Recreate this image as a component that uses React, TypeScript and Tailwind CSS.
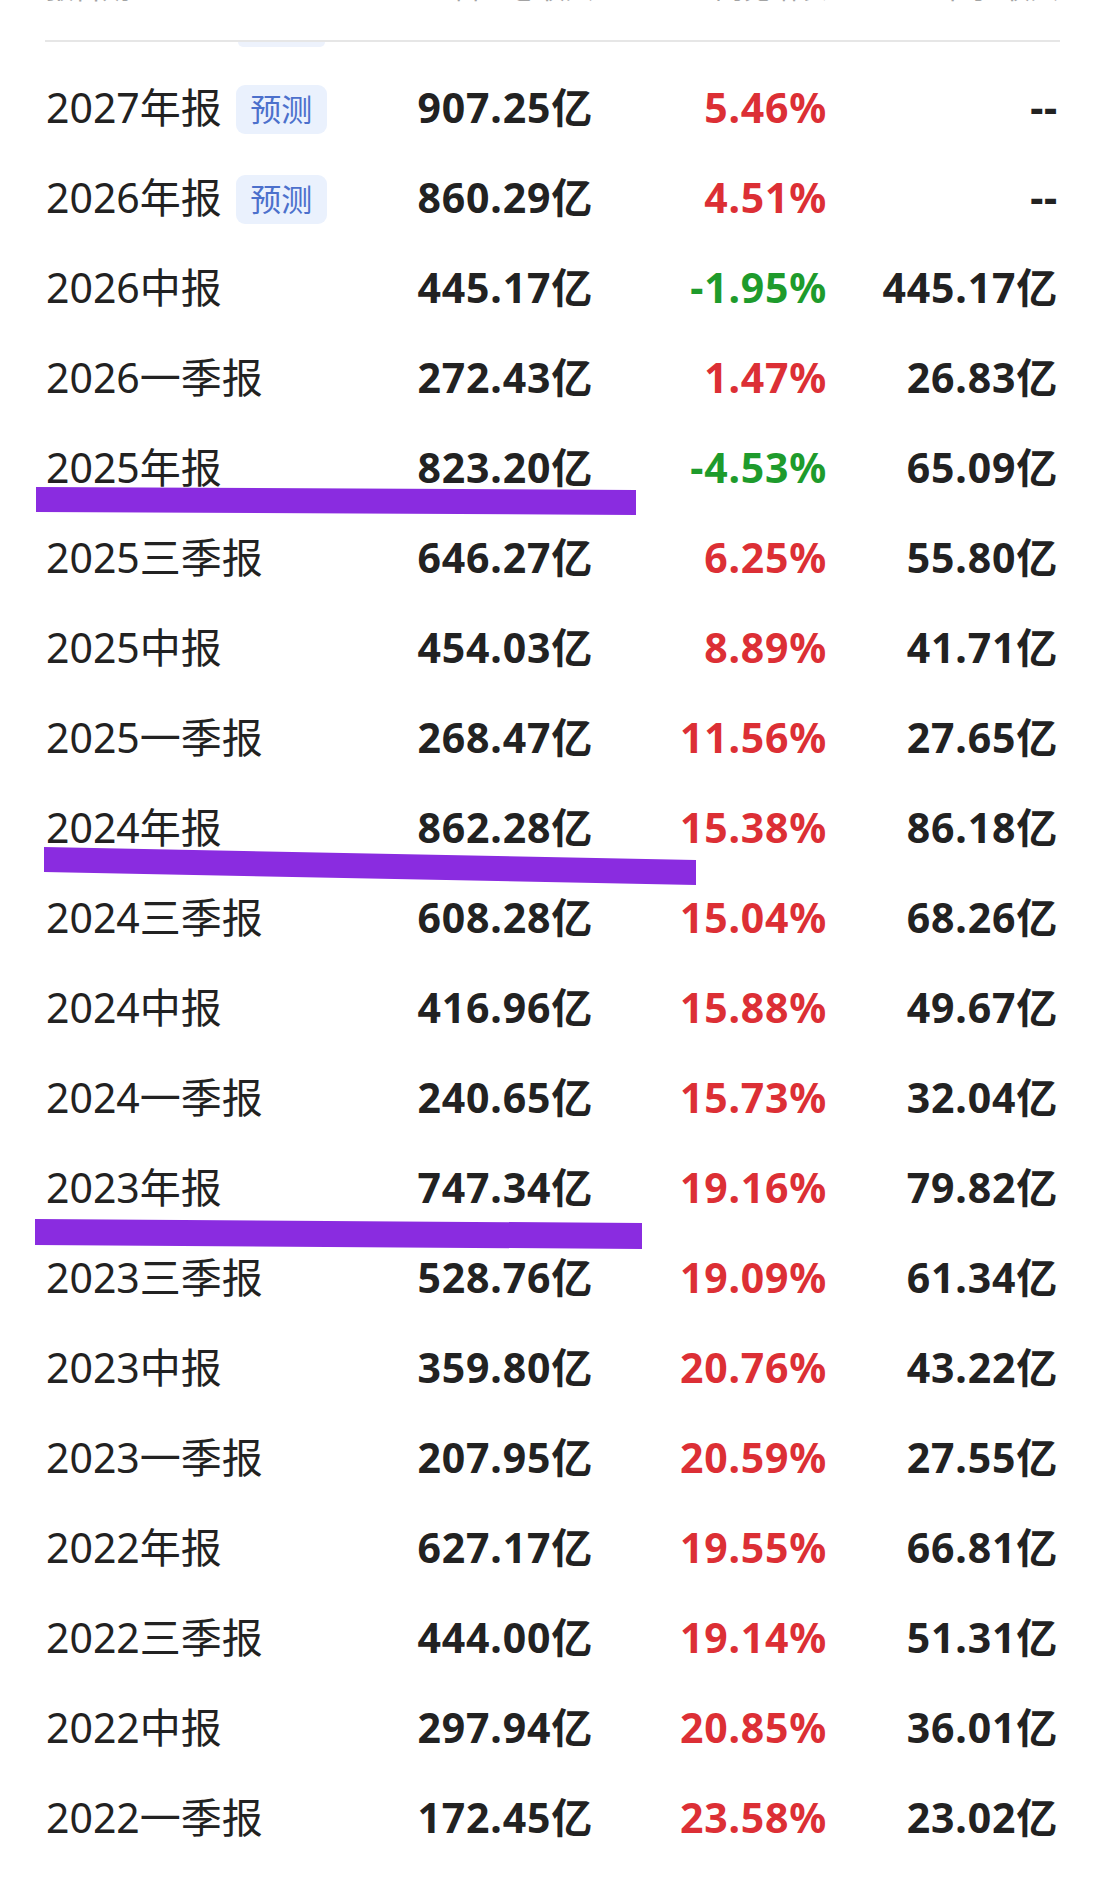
import React from "react";

type Row = { name: string; badge?: boolean; rev: string; yoy: string; q: string };

const rows: Row[] = [
  { name: "2027年报", badge: true, rev: "907.25亿", yoy: "5.46%", q: "--" },
  { name: "2026年报", badge: true, rev: "860.29亿", yoy: "4.51%", q: "--" },
  { name: "2026中报", rev: "445.17亿", yoy: "-1.95%", q: "445.17亿" },
  { name: "2026一季报", rev: "272.43亿", yoy: "1.47%", q: "26.83亿" },
  { name: "2025年报", rev: "823.20亿", yoy: "-4.53%", q: "65.09亿" },
  { name: "2025三季报", rev: "646.27亿", yoy: "6.25%", q: "55.80亿" },
  { name: "2025中报", rev: "454.03亿", yoy: "8.89%", q: "41.71亿" },
  { name: "2025一季报", rev: "268.47亿", yoy: "11.56%", q: "27.65亿" },
  { name: "2024年报", rev: "862.28亿", yoy: "15.38%", q: "86.18亿" },
  { name: "2024三季报", rev: "608.28亿", yoy: "15.04%", q: "68.26亿" },
  { name: "2024中报", rev: "416.96亿", yoy: "15.88%", q: "49.67亿" },
  { name: "2024一季报", rev: "240.65亿", yoy: "15.73%", q: "32.04亿" },
  { name: "2023年报", rev: "747.34亿", yoy: "19.16%", q: "79.82亿" },
  { name: "2023三季报", rev: "528.76亿", yoy: "19.09%", q: "61.34亿" },
  { name: "2023中报", rev: "359.80亿", yoy: "20.76%", q: "43.22亿" },
  { name: "2023一季报", rev: "207.95亿", yoy: "20.59%", q: "27.55亿" },
  { name: "2022年报", rev: "627.17亿", yoy: "19.55%", q: "66.81亿" },
  { name: "2022三季报", rev: "444.00亿", yoy: "19.14%", q: "51.31亿" },
  { name: "2022中报", rev: "297.94亿", yoy: "20.85%", q: "36.01亿" },
  { name: "2022一季报", rev: "172.45亿", yoy: "23.58%", q: "23.02亿" },
];

export default function App() {
  return (
    <div
      className="relative w-[1102px] h-[1880px] overflow-hidden bg-white text-[#222222]"
      style={{ fontFamily: '"Noto Sans", "Noto Sans CJK SC", sans-serif' }}
    >
      {/* header (mostly scrolled off) */}
      <div className="pl-[46px] pr-[44px]">
        <div className="-mt-[27px] h-[30px] grid grid-cols-[360px_187px_234px_231px] text-[28px] leading-[30px] text-[#a3a3a3]">
          <div>报告期</div>
          <div className="text-right">营业总收入</div>
          <div className="text-right">同比增长</div>
          <div className="text-right">单季 收入</div>
        </div>
      </div>
      <div className="mt-[37px] ml-[45px] w-[1015px] h-[2px] bg-[#e6e6e6]" />
      <div className="ml-[238px] w-[87px] h-[5px] rounded-b-lg bg-[#edf2fc]" />

      <div className="mt-[15px] pl-[46px] pr-[44px]">
        {rows.map((r) => {
          const neg = r.yoy.startsWith("-");
          return (
            <div
              key={r.name}
              className="h-[90px] grid grid-cols-[360px_187px_234px_231px] items-center text-[41px] leading-[56px]"
            >
              <div className="flex items-center">
                <span>{r.name}</span>
                {r.badge && (
                  <span className="ml-[14px] mt-[5px] flex h-[49px] w-[91px] items-center justify-center rounded-[9px] bg-[#eaf1fd] text-[31px] leading-none text-[#4c70cc]">
                    预测
                  </span>
                )}
              </div>
              <div className="text-right font-bold tracking-[0.8px]">{r.rev}</div>
              <div
                className={
                  "text-right font-bold tracking-[0.8px] " +
                  (neg ? "text-[#1e9b2c]" : "text-[#dc2f35]")
                }
              >
                {r.yoy}
              </div>
              <div className="text-right font-bold tracking-[0.8px]">{r.q}</div>
            </div>
          );
        })}
      </div>

      {/* hand-drawn purple highlight strokes */}
      <svg
        className="absolute left-0 top-0 pointer-events-none"
        width="1102"
        height="1880"
        viewBox="0 0 1102 1880"
      >
        <polygon points="36,487 636,490 636,515 36,512" fill="#8a2ce0" />
        <polygon points="44,847 696,860 696,885 44,872" fill="#8a2ce0" />
        <polygon points="35,1219 642,1223 642,1249 35,1245" fill="#8a2ce0" />
      </svg>
    </div>
  );
}
